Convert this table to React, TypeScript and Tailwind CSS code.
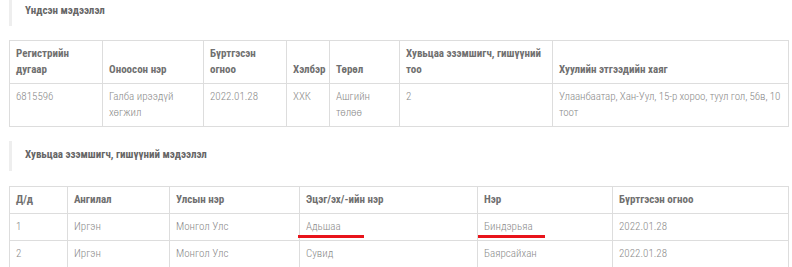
const font = { fontFamily: '"Roboto Condensed", Roboto, "Liberation Sans", sans-serif' };

function SectionTitle({ children, h }: { children: string; h: string }) {
  return (
    <div className={`ml-[9px] flex items-center border-l-[3px] border-[#eeeeee] pl-[13px] ${h}`}>
      <span className="text-[11px] font-bold text-[#666]">{children}</span>
    </div>
  );
}

const th = "border border-[#dddddd] px-[6px] py-[5px] text-left align-bottom font-bold text-[#707070] leading-4";
const td = "border border-[#dddddd] px-[6px] py-[5px] text-left align-top font-light text-[#8a8a8a] leading-4";

export default function App() {
  return (
    <div className="w-[792px] h-[267px] overflow-hidden bg-white text-[11px] [font-stretch:75%]" style={font}>
      <SectionTitle h="h-[26px] pb-[4px]">Үндсэн мэдээлэл</SectionTitle>

      <table className="ml-[9px] mt-[14px] w-[780px] table-fixed border-collapse">
        <colgroup>
          <col className="w-[93px]" />
          <col className="w-[101px]" />
          <col className="w-[83px]" />
          <col className="w-[43px]" />
          <col className="w-[70px]" />
          <col className="w-[153px]" />
          <col />
        </colgroup>
        <thead>
          <tr className="h-[42px]">
            <th className={th}>Регистрийн дугаар</th>
            <th className={th}>Оноосон нэр</th>
            <th className={th}>Бүртгэсэн огноо</th>
            <th className={th}>Хэлбэр</th>
            <th className={th}>Төрөл</th>
            <th className={th}>Хувьцаа эзэмшигч, гишүүний тоо</th>
            <th className={th}>Хуулийн этгээдийн хаяг</th>
          </tr>
        </thead>
        <tbody>
          <tr className="h-[42px]">
            <td className={td}>6815596</td>
            <td className={td}>Галба ирээдүй хөгжил</td>
            <td className={td}>2022.01.28</td>
            <td className={td}>ХХК</td>
            <td className={td}>Ашгийн төлөө</td>
            <td className={td}>2</td>
            <td className={`${td} !pr-0 tracking-[-0.1px]`}>
              Улаанбаатар, Хан-Уул, 15-р хороо, туул гол, 56в, 10 тоот
            </td>
          </tr>
        </tbody>
      </table>

      <div className="mt-[14px]">
        <SectionTitle h="h-[30px] pb-[2px]">Хувьцаа эзэмшигч, гишүүний мэдээлэл</SectionTitle>
      </div>

      <table className="ml-[9px] mt-[15px] w-[780px] table-fixed border-collapse">
        <colgroup>
          <col className="w-[58px]" />
          <col className="w-[102px]" />
          <col className="w-[130px]" />
          <col className="w-[178px]" />
          <col className="w-[135px]" />
          <col />
        </colgroup>
        <thead>
          <tr className="h-[27px]">
            <th className={th}>Д/д</th>
            <th className={th}>Ангилал</th>
            <th className={th}>Улсын нэр</th>
            <th className={th}>Эцэг/эх/-ийн нэр</th>
            <th className={th}>Нэр</th>
            <th className={th}>Бүртгэсэн огноо</th>
          </tr>
        </thead>
        <tbody>
          <tr className="h-[27px]">
            <td className={td}>1</td>
            <td className={td}>Иргэн</td>
            <td className={td}>Монгол Улс</td>
            <td className={`${td} relative`}>
              Адьшаа
              <span className="absolute left-[-2px] top-[21px] h-[3px] w-[66px] bg-[#e8141b]" />
            </td>
            <td className={`${td} relative`}>
              Биндэрьяа
              <span className="absolute left-0 top-[21px] h-[3px] w-[67px] bg-[#e8141b]" />
            </td>
            <td className={td}>2022.01.28</td>
          </tr>
          <tr className="h-[27px]">
            <td className={td}>2</td>
            <td className={td}>Иргэн</td>
            <td className={td}>Монгол Улс</td>
            <td className={td}>Сувид</td>
            <td className={td}>Баярсайхан</td>
            <td className={td}>2022.01.28</td>
          </tr>
        </tbody>
      </table>
    </div>
  );
}
